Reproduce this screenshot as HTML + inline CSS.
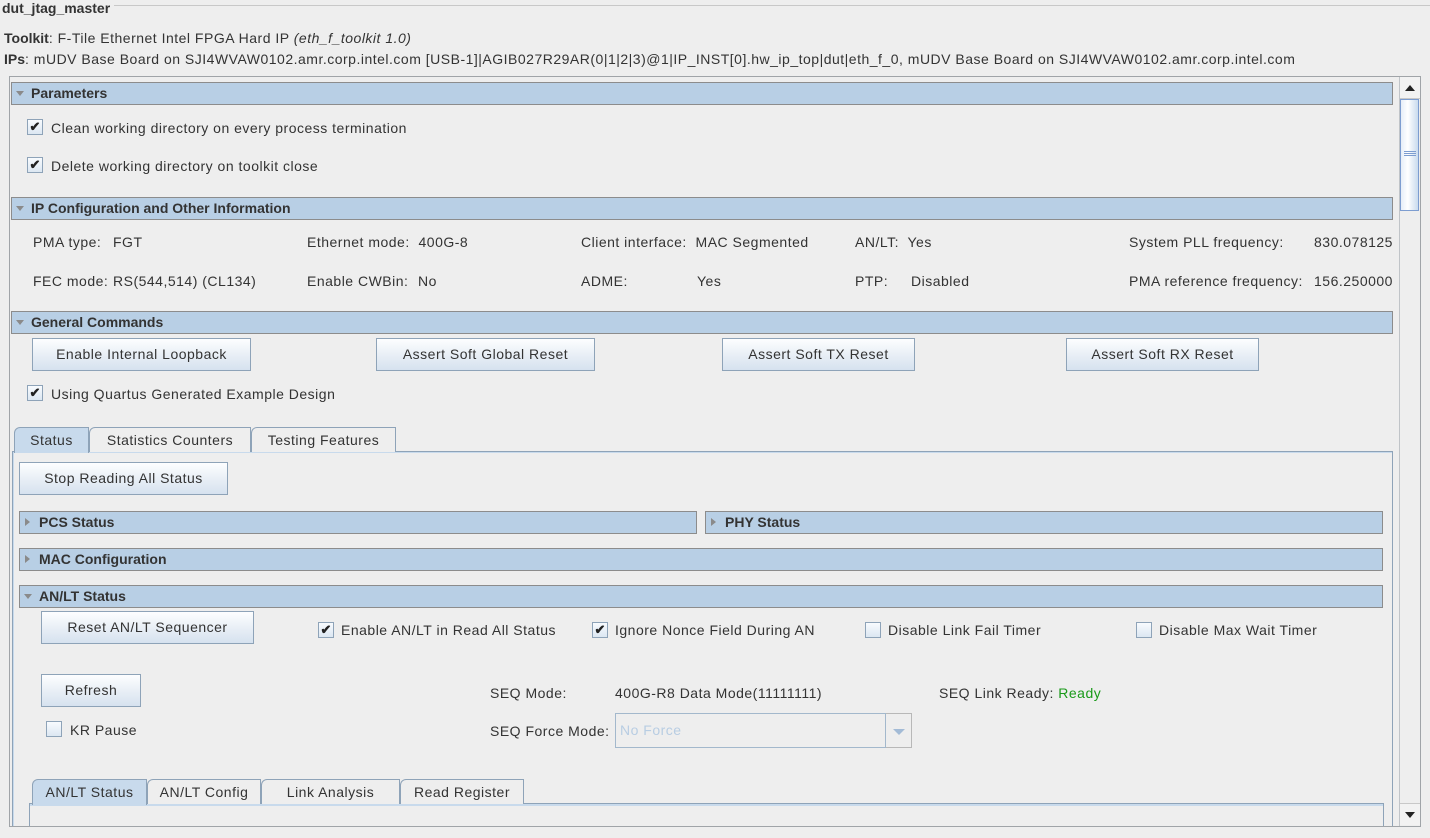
<!DOCTYPE html>
<html><head><meta charset="utf-8">
<style>
*{box-sizing:border-box;margin:0;padding:0}
body{width:1430px;height:838px;background:#eeeeee;font-family:"Liberation Sans",sans-serif;font-size:14px;color:#333;position:relative;overflow:hidden;letter-spacing:0.5px}
b,.hdr{letter-spacing:0}
.a{position:absolute;white-space:nowrap}
.t{position:absolute;white-space:nowrap;line-height:16px;color:#333}
.hdr{position:absolute;height:23px;background:#b8cfe5;border:1px solid #8c8c8c;font-weight:bold;line-height:21px;padding-left:19px;color:#333}
.tri{position:absolute;left:4px;top:8px;width:0;height:0;border-left:4px solid transparent;border-right:4px solid transparent;border-top:5px solid #8a8a8a}
.trr{position:absolute;left:5px;top:6px;width:0;height:0;border-top:4px solid transparent;border-bottom:4px solid transparent;border-left:5px solid #8a8a8a}
.btn{position:absolute;height:33px;border:1px solid #8ea3b8;background:linear-gradient(#fdfeff,#e9eff6 50%,#d6e2ef);text-align:center;line-height:31px;color:#333}
.cb{position:absolute;width:16px;height:16px;border:1px solid #8ea3b8;background:linear-gradient(#f8fbfe,#dce7f2);font-size:13px;line-height:14px;text-align:center;color:#222;font-weight:bold;letter-spacing:0}
.tab{position:absolute;height:25px;border:1px solid #8ea3b8;border-bottom:none;background:#eeeeee;line-height:24px;text-align:center;color:#333;border-radius:6px 0 0 0}
.tab.sel{background:#c8daec;}
</style></head><body>
<div class="a" style="left:114px;top:5px;width:1316px;height:1px;background:#c8c8c8"></div>
<div class="t" style="left:2px;top:0px;font-weight:bold;color:#333;letter-spacing:0">dut_jtag_master</div>
<div class="t" style="left:4px;top:30px"><b>Toolkit</b>: F-Tile Ethernet Intel FPGA Hard IP <i>(eth_f_toolkit 1.0)</i></div>
<div class="t" style="left:4px;top:51px"><b>IPs</b>: mUDV Base Board on SJI4WVAW0102.amr.corp.intel.com [USB-1]|AGIB027R29AR(0|1|2|3)@1|IP_INST[0].hw_ip_top|dut|eth_f_0, mUDV Base Board on SJI4WVAW0102.amr.corp.intel.com</div>

<div class="a" style="left:9px;top:76px;width:1412px;height:751px;border:1px solid #a0a4a8"></div>
<div class="a" style="left:1399px;top:77px;width:21px;height:749px;background:#eeeeee;border-left:1px solid #c0c4c8"></div>
<div class="a" style="left:1400px;top:77px;width:20px;height:22px;background:#f2f2f2;border-bottom:1px solid #c8c8c8"></div>
<div class="a" style="left:1405px;top:85px;width:0;height:0;border-left:5px solid transparent;border-right:5px solid transparent;border-bottom:6px solid #222"></div>
<div class="a" style="left:1400px;top:99px;width:19px;height:112px;border:1px solid #7d9dd0;background:linear-gradient(90deg,#e6eef8,#ffffff 40%,#c9dbee)"></div>
<div class="a" style="left:1404px;top:151px;width:12px;height:1px;background:#7d9dd0;box-shadow:0 2px 0 #7d9dd0,0 4px 0 #7d9dd0"></div>
<div class="a" style="left:1400px;top:803px;width:20px;height:22px;background:#f2f2f2;border-top:1px solid #c8c8c8"></div>
<div class="a" style="left:1405px;top:812px;width:0;height:0;border-left:5px solid transparent;border-right:5px solid transparent;border-top:6px solid #222"></div>

<div class="hdr" style="left:11px;top:82px;width:1382px"><div class="tri"></div>Parameters</div>
<div class="cb" style="left:27px;top:119px">✔</div>
<div class="t" style="left:51px;top:120px">Clean working directory on every process termination</div>
<div class="cb" style="left:27px;top:157px">✔</div>
<div class="t" style="left:51px;top:158px">Delete working directory on toolkit close</div>

<div class="hdr" style="left:11px;top:197px;width:1382px"><div class="tri"></div>IP Configuration and Other Information</div>
<div class="t" style="left:33px;top:234px">PMA type:</div><div class="t" style="left:113px;top:234px">FGT</div>
<div class="t" style="left:307px;top:234px">Ethernet mode:&nbsp; 400G-8</div>
<div class="t" style="left:581px;top:234px">Client interface:&nbsp; MAC Segmented</div>
<div class="t" style="left:855px;top:234px">AN/LT:&nbsp; Yes</div>
<div class="t" style="left:1129px;top:234px">System PLL frequency:</div>
<div class="t" style="left:1314px;top:234px">830.078125</div>
<div class="t" style="left:33px;top:273px">FEC mode:</div><div class="t" style="left:113px;top:273px">RS(544,514) (CL134)</div>
<div class="t" style="left:307px;top:273px">Enable CWBin:</div><div class="t" style="left:418px;top:273px">No</div>
<div class="t" style="left:581px;top:273px">ADME:</div>
<div class="t" style="left:697px;top:273px">Yes</div>
<div class="t" style="left:855px;top:273px">PTP:</div><div class="t" style="left:911px;top:273px">Disabled</div>
<div class="t" style="left:1129px;top:273px">PMA reference frequency:</div>
<div class="t" style="left:1314px;top:273px">156.250000</div>

<div class="hdr" style="left:11px;top:311px;width:1382px"><div class="tri"></div>General Commands</div>
<div class="btn" style="left:32px;top:338px;width:219px">Enable Internal Loopback</div>
<div class="btn" style="left:376px;top:338px;width:219px">Assert Soft Global Reset</div>
<div class="btn" style="left:722px;top:338px;width:193px">Assert Soft TX Reset</div>
<div class="btn" style="left:1066px;top:338px;width:193px">Assert Soft RX Reset</div>
<div class="cb" style="left:27px;top:385px">✔</div>
<div class="t" style="left:51px;top:386px">Using Quartus Generated Example Design</div>

<div class="a" style="left:12px;top:451px;width:1381px;height:380px;border:1px solid #8ea3b8;border-bottom:none;box-shadow:inset 1px 1px 0 #c8daec"></div>
<div class="tab sel" style="left:14px;top:427px;width:75px;height:26px">Status</div>
<div class="tab" style="left:89px;top:427px;width:162px">Statistics Counters</div>
<div class="tab" style="left:251px;top:427px;width:145px">Testing Features</div>

<div class="btn" style="left:19px;top:462px;width:209px">Stop Reading All Status</div>
<div class="hdr" style="left:19px;top:511px;width:678px"><div class="trr"></div>PCS Status</div>
<div class="hdr" style="left:705px;top:511px;width:678px"><div class="trr"></div>PHY Status</div>
<div class="hdr" style="left:19px;top:548px;width:1364px"><div class="trr"></div>MAC Configuration</div>
<div class="hdr" style="left:19px;top:585px;width:1364px"><div class="tri"></div>AN/LT Status</div>

<div class="btn" style="left:41px;top:611px;width:213px">Reset AN/LT Sequencer</div>
<div class="cb" style="left:318px;top:622px">✔</div>
<div class="t" style="left:341px;top:622px">Enable AN/LT in Read All Status</div>
<div class="cb" style="left:592px;top:622px">✔</div>
<div class="t" style="left:615px;top:622px">Ignore Nonce Field During AN</div>
<div class="cb" style="left:865px;top:622px"></div>
<div class="t" style="left:888px;top:622px">Disable Link Fail Timer</div>
<div class="cb" style="left:1136px;top:622px"></div>
<div class="t" style="left:1159px;top:622px">Disable Max Wait Timer</div>

<div class="btn" style="left:41px;top:674px;width:100px">Refresh</div>
<div class="t" style="left:490px;top:685px">SEQ Mode:</div>
<div class="t" style="left:615px;top:685px">400G-R8 Data Mode(11111111)</div>
<div class="t" style="left:939px;top:685px">SEQ Link Ready: <span style="color:#1a9a1a">Ready</span></div>
<div class="cb" style="left:46px;top:721px"></div>
<div class="t" style="left:70px;top:722px">KR Pause</div>
<div class="t" style="left:490px;top:723px">SEQ Force Mode:</div>
<div class="a" style="left:615px;top:713px;width:271px;height:35px;border:1px solid #a3b8cc;background:#eeeeee;color:#b8cde3;line-height:33px;padding-left:4px">No Force</div>
<div class="a" style="left:886px;top:713px;width:26px;height:35px;border:1px solid #b8b8b8;border-left:none;background:#eeeeee"></div>
<div class="a" style="left:893px;top:729px;width:0;height:0;border-left:6px solid transparent;border-right:6px solid transparent;border-top:6px solid #a3bbd6"></div>

<div class="a" style="left:29px;top:803px;width:1355px;height:30px;border:1px solid #8ea3b8;border-bottom:none;box-shadow:inset 0 2px 0 #c8daec"></div>
<div class="tab sel" style="left:32px;top:779px;width:115px;height:26px">AN/LT Status</div>
<div class="tab" style="left:147px;top:779px;width:114px">AN/LT Config</div>
<div class="tab" style="left:261px;top:779px;width:139px">Link Analysis</div>
<div class="tab" style="left:400px;top:779px;width:124px">Read Register</div>
<div class="a" style="left:0;top:827px;width:1430px;height:11px;background:#eeeeee"></div>
<div class="a" style="left:9px;top:826px;width:1412px;height:1px;background:#a0a4a8"></div>
</body></html>
